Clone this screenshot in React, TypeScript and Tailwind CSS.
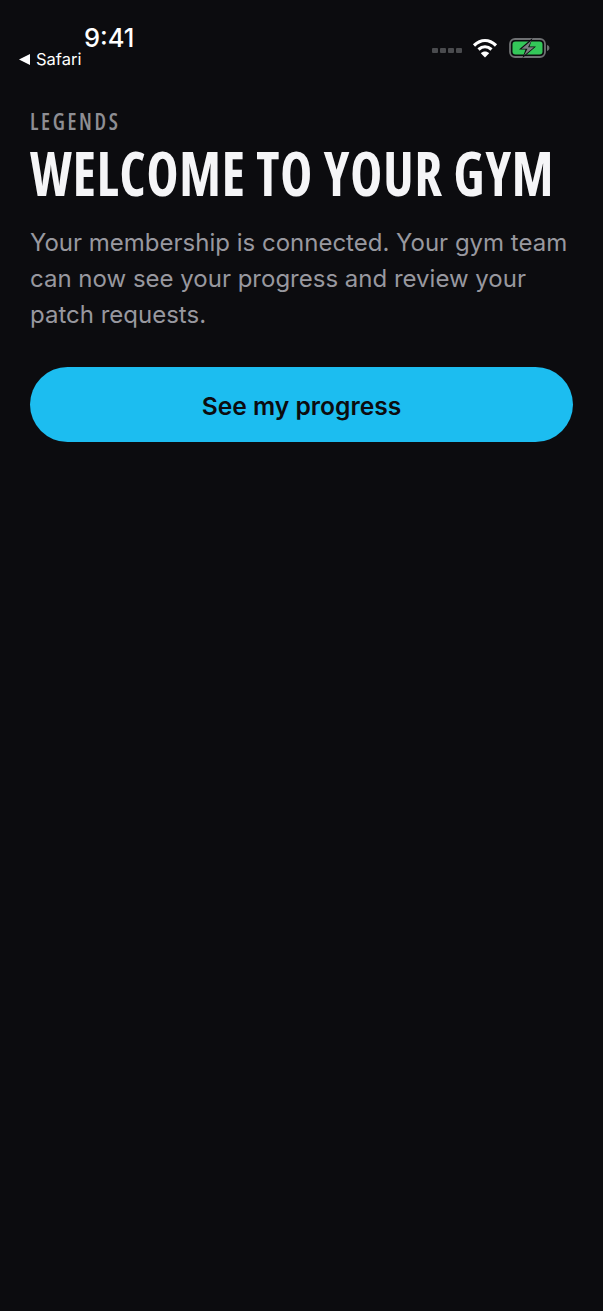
export default function App() {
  return (
    <div className="min-h-[1311px] bg-[#0c0c0f] font-['Inter',sans-serif] overflow-hidden">
      {/* Status bar */}
      <div className="flex items-start justify-between h-[77px] pl-[19px] pr-[53px] pt-[24px]">
        <div className="flex flex-col">
          <span className="ml-[65px] text-[25.5px] leading-[28px] font-medium text-white">9:41</span>
          <div className="flex items-center gap-[6px] mt-[-2px] h-[18px]">
            <svg width="11" height="11" viewBox="0 0 11 11"><path d="M0 5.5L11 0V11Z" fill="#fff" /></svg>
            <span className="text-[16.5px] leading-[18px] text-white">Safari</span>
          </div>
        </div>
        <div className="flex items-center gap-[11px] mt-[12px] h-[24px]">
          <div className="flex gap-[2px] mt-[5px] mr-[-1px]">
            <span className="w-[6px] h-[5px] rounded-[1px] bg-[#4a4b4e]" />
            <span className="w-[6px] h-[5px] rounded-[1px] bg-[#4a4b4e]" />
            <span className="w-[6px] h-[5px] rounded-[1px] bg-[#4a4b4e]" />
            <span className="w-[6px] h-[5px] rounded-[1px] bg-[#4a4b4e]" />
          </div>
          <svg width="26" height="20" viewBox="0 0 26 20" fill="none" stroke="#fff" strokeWidth="3.2">
            <path d="M2 7.5C9 1 17 1 24 7.5" />
            <path d="M6.5 11.5C10.5 8 15.5 8 19.5 11.5" />
            <path d="M13 19.5L8.8 15.2C11 12.8 15 12.8 17.2 15.2Z" fill="#fff" stroke="none" />
          </svg>
          <svg width="41" height="20" viewBox="0 0 41 20" fill="none">
            <rect x="1" y="1" width="35" height="18" rx="5" stroke="#6e7072" strokeWidth="1.8" />
            <rect x="3.5" y="3.5" width="30" height="13" rx="3" fill="#34c759" />
            <path d="M38 7c1.6.4 2.4 1.6 2.4 3s-.8 2.6-2.4 3z" fill="#6e7072" />
            <path d="M23.5 0L10 11.5H16.5L13.5 20L27 8.5H20.5Z" fill="#0c0c0f" />
            <path d="M22.5 2.5L12.5 10.8H18.5L15 17.5L25 9.2H19Z" fill="#7c7f82" />
          </svg>
        </div>
      </div>

      {/* Content */}
      <div className="flex flex-col px-[30px]">
        <div className="mt-[30px] font-['Open_Sans',sans-serif] font-stretch-condensed font-semibold text-[24px] leading-[28px] tracking-[3px] text-[#8e8e93] whitespace-nowrap origin-left scale-x-[0.9]">LEGENDS</div>
        <h1 className="mt-[6px] font-['Open_Sans',sans-serif] font-stretch-condensed font-bold text-[61px] leading-[64px] tracking-[1px] text-[#f5f5f7] whitespace-nowrap origin-left scale-x-[0.885]">WELCOME TO YOUR GYM</h1>
        <p className="mt-[20px] text-[24px] leading-[36px] text-[#98989f]">Your membership is connected. Your gym team can now see your progress and review your patch requests.</p>
        <button className="mt-[34px] h-[75px] pt-[3px] rounded-full bg-[#1cbdf0] text-[#0c0c0f] text-[24.6px] font-semibold">See my progress</button>
      </div>
    </div>
  );
}
